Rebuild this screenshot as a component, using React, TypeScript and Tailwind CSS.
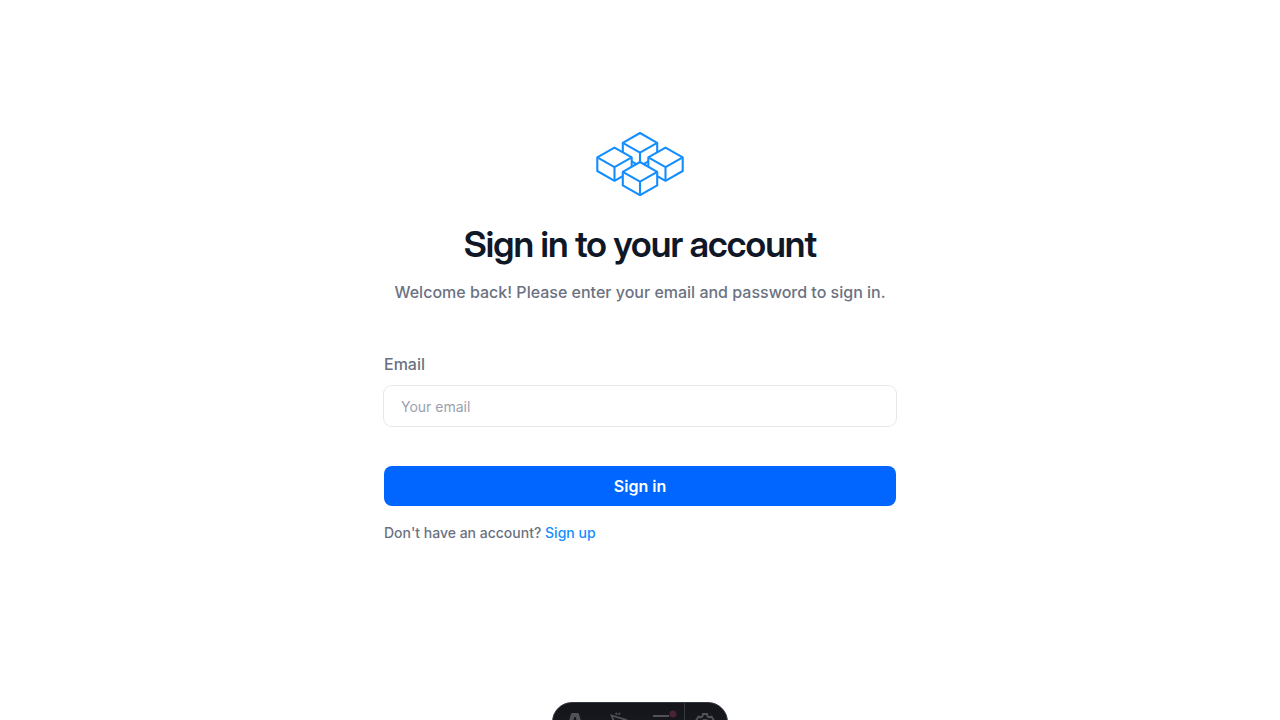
import type { ReactNode } from "react";

function Cube({ x, y }: { x: number; y: number }) {
  return (
    <g transform={`translate(${x} ${y})`}>
      <path d="M0 0 17.2 9.8V23.4L0 33.2-17.2 23.4V9.8Z" fill="white" />
      <path d="M-17.2 9.8 0 19.6 17.2 9.8M0 19.6V33.2" fill="none" />
    </g>
  );
}

function Logo() {
  return (
    <svg
      width="88"
      height="64"
      viewBox="0 0 88 64"
      stroke="#148eff"
      strokeWidth="2.1"
      strokeLinejoin="round"
      role="img"
      aria-label="Logo"
    >
      <Cube x={44} y={1} />
      <Cube x={18.5} y={15.6} />
      <Cube x={69.5} y={15.6} />
      <Cube x={44} y={30} />
    </svg>
  );
}

function ToolbarButton({ label, children }: { label: string; children: ReactNode }) {
  return (
    <button type="button" aria-label={label} className="flex flex-1 justify-center pt-2.5 text-[#515257]">
      {children}
    </button>
  );
}

function DevToolbar() {
  return (
    <div className="fixed -bottom-[22px] left-1/2 flex h-10 w-44 -translate-x-1/2 overflow-hidden rounded-full border border-[#343841] bg-linear-to-b from-[#13151a] to-[#1c1b22]">
      <div className="flex w-[132px] border-r border-[#343841]">
        <ToolbarButton label="Menu">
          <svg width="16" height="20" viewBox="0 0 16 20" fill="currentColor" overflow="visible">
            <path d="M5.2 0h5.6q.8 0 1.1.8L16 15q-2-.9-4.4-1.3L8.8 4.5q-.8-1.5-1.6 0L4.4 13.7Q2 14.1 0 15L4.1.8Q4.4 0 5.2 0Z" />
          </svg>
        </ToolbarButton>
        <ToolbarButton label="Inspect">
          <svg width="20" height="20" viewBox="0 0 20 20" fill="none" stroke="currentColor" strokeWidth="1.8" overflow="visible">
            <path d="m2.5 2.5 14 4.2-5 3.6-3 6ZM7-.2l.7 2M10.7-.2 10 1.8" />
          </svg>
        </ToolbarButton>
        <ToolbarButton label="Audit">
          <svg width="24" height="20" viewBox="0 0 24 20" fill="none" stroke="currentColor" strokeWidth="2" overflow="visible">
            <path d="M3 3h16M3 8h18M3 13h12" />
            <circle cx="23" cy="1" r="3.5" fill="#4a2237" stroke="none" />
          </svg>
        </ToolbarButton>
      </div>
      <div className="flex w-10">
        <ToolbarButton label="Settings">
          <svg width="20" height="20" viewBox="0 0 20 20" fill="none" stroke="currentColor" strokeWidth="2">
            <path d="M8 1h4l.6 2.4 1.6.9 2.4-.7 2 3.4-1.8 1.8v2.4l1.8 1.8-2 3.4-2.4-.7-1.6.9L12 19H8l-.6-2.4-1.6-.9-2.4.7-2-3.4 1.8-1.8V8.8L1.4 7l2-3.4 2.4.7 1.6-.9Z" />
            <circle cx="10" cy="10" r="3" />
          </svg>
        </ToolbarButton>
      </div>
    </div>
  );
}

export default function App() {
  return (
    <div className="min-h-screen bg-white px-6 pt-33 font-['Inter',sans-serif] font-medium text-gray-500">
      <main className="mx-auto flex max-w-lg flex-col">
        <header className="flex flex-col items-center text-center">
          <Logo />
          <h1 className="mt-7 font-['Inter_Display','Inter',sans-serif] text-4xl leading-10 font-semibold tracking-tight text-gray-900">
            Sign in to your account
          </h1>
          <p className="mt-4 text-base">
            Welcome back! Please enter your email and password to sign in.
          </p>
        </header>
        <form className="mt-12 flex flex-col" onSubmit={(event) => event.preventDefault()}>
          <label htmlFor="email">Email</label>
          <input
            id="email"
            type="email"
            placeholder="Your email"
            className="mt-2.5 h-10 rounded-lg px-[17px] text-sm font-normal text-gray-900 ring-1 ring-gray-200 placeholder:text-gray-400"
          />
          <button type="submit" className="mt-10 h-10 rounded-lg bg-[#0066ff] font-semibold text-white">
            Sign in
          </button>
        </form>
        <p className="mt-4 text-sm leading-[22px]">
          Don't have an account?{" "}
          <a href="#signup" className="text-[#148eff]">
            Sign up
          </a>
        </p>
      </main>
      <DevToolbar />
    </div>
  );
}
